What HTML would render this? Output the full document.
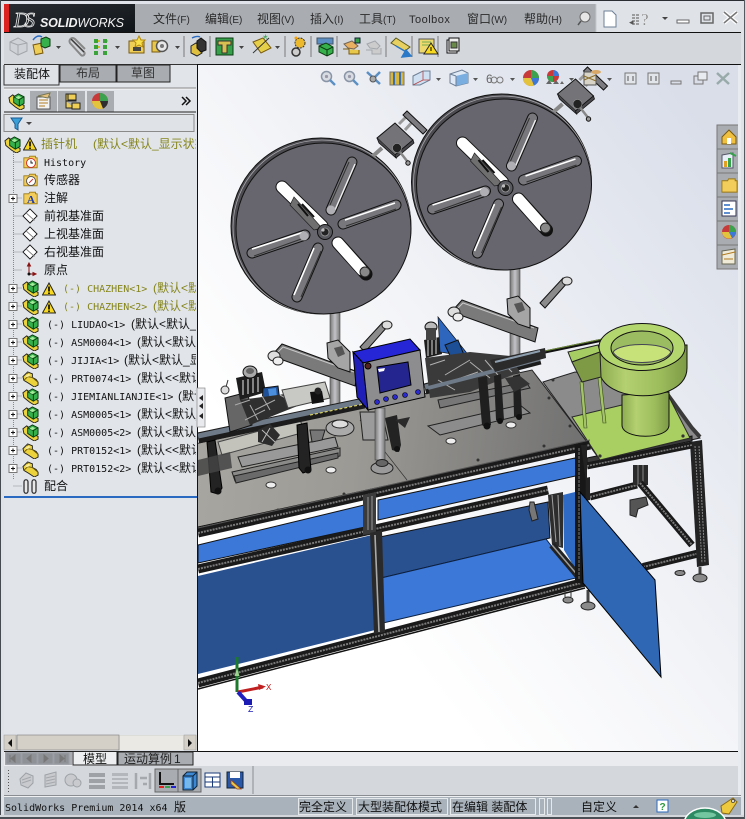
<!DOCTYPE html>
<html><head><meta charset="utf-8"><style>
html,body{margin:0;padding:0;background:#d3d7dc;width:745px;height:819px;overflow:hidden}
svg{display:block}
.c{font-family:"Liberation Sans","WenQuanYi Zen Hei","Noto Sans CJK SC",sans-serif;font-size:12px;fill:#111}
.m{font-family:"DejaVu Sans Mono","Liberation Mono","WenQuanYi Zen Hei",monospace;font-size:10px;fill:#111}
.mn{font-family:"Liberation Sans","WenQuanYi Zen Hei","Noto Sans CJK SC",sans-serif;font-size:12px;fill:#2a2a2a}
.o{fill:#85851a}
.i{fill:none;stroke:#000}
.rk{fill:none;stroke:#1a1a1a;stroke-width:9}
.rd{fill:none;stroke:#7a7a7a;stroke-width:2;stroke-dasharray:2 1}
.rt{fill:none;stroke:#555;stroke-width:1}
.tree text{transform:translateY(-1px)}
</style></head><body>
<svg xmlns="http://www.w3.org/2000/svg" width="745" height="819" viewBox="0 0 745 819">
<defs>
<linearGradient id="bg" gradientUnits="userSpaceOnUse" x1="300" y1="520" x2="745" y2="170"><stop offset="0" stop-color="#fff"/><stop offset=".35" stop-color="#f4f5f8"/><stop offset="1" stop-color="#d9dee9"/></linearGradient>
<linearGradient id="plate" gradientUnits="userSpaceOnUse" x1="200" y1="420" x2="590" y2="470"><stop offset="0" stop-color="#a8a6a0"/><stop offset=".4" stop-color="#9c9a95"/><stop offset="1" stop-color="#6f6f6f"/></linearGradient>
<linearGradient id="logo" x1="0" x2="1" y1="0" y2="1"><stop offset="0" stop-color="#2a2e33"/><stop offset="1" stop-color="#10151a"/></linearGradient>
<linearGradient id="bowl" x1="0" x2="1" y1="0" y2="0"><stop offset="0" stop-color="#8cac50"/><stop offset=".3" stop-color="#b4d070"/><stop offset=".7" stop-color="#9cbc5c"/><stop offset="1" stop-color="#7d9a45"/></linearGradient>
<linearGradient id="pole" x1="0" x2="1" y1="0" y2="0"><stop offset="0" stop-color="#777"/><stop offset=".5" stop-color="#c4c4c8"/><stop offset="1" stop-color="#777"/></linearGradient>
<clipPath id="tree"><rect x="0" y="134" width="196" height="364"/></clipPath>
<clipPath id="vp"><rect x="198" y="65" width="542" height="686"/></clipPath>
<symbol id="asm" viewBox="0 0 18 18"><path d="M1 5 5 2 9 5 9 10 17 13 17 16 13 18 8 15 2 10Z" fill="#ecd23c" stroke="#222"/><path d="M6 4 11 1 17 4 17 11 12 14 6 10Z" fill="#36b04a" stroke="#0c3a12"/><path d="M6 4 12 7 17 4M12 7V14" fill="none" stroke="#0c3a12"/><path d="M8 5 11 3 14 4.500 11 6.500Z" fill="#a6eb9c"/></symbol>
<symbol id="prt" viewBox="0 0 18 18"><path d="M1 7 6 2 11 4 11 8 15 10 17 13 17 16 13 18 7 14 2 11Z" fill="#ecd23c" stroke="#222"/><path d="M6 2V7L11 8M6 7 2 11M11 8 17 13" fill="none" stroke="#6e5b0c"/><path d="M3 8 6 4 9 5 7 7Z" fill="#f9ee9e"/></symbol>
<symbol id="warn" viewBox="0 0 14 14"><path d="M7 1 13.500 13H.5Z" fill="#f8d820" stroke="#222"/><path d="M7 4.500V9.500M7 10.500V12" stroke="#000" stroke-width="1.600"/></symbol>
<symbol id="folder" viewBox="0 0 18 18"><path d="M1 4H7L8 2H15V4H17V16H1Z" fill="#f2cd5c" stroke="#9a7712"/></symbol>
<symbol id="plane" viewBox="0 0 18 18"><path d="M9 1 17 9 9 17 1 9Z" fill="#fff" stroke="#111"/><path d="M4 5 14 14" stroke="#777"/></symbol>
<symbol id="hu" viewBox="0 0 16 16"><circle cx="6.500" cy="6.500" r="5" fill="#d8dce2" stroke="#8995a6" stroke-width="1.500"/><circle cx="6.500" cy="6.500" r="1.600" fill="#99a"/><path d="M10 10 15 15" stroke="#5b8fc4" stroke-width="2.400"/></symbol>
<g id="disc">
  <ellipse cx="321" cy="226" rx="90" ry="88" fill="#4b4b50" stroke="#111"/>
  <ellipse cx="322" cy="227" rx="89" ry="87" fill="none" stroke="#a8a8ac" stroke-width=".8"/>
  <ellipse cx="323.500" cy="228.500" rx="87.500" ry="85.500" fill="#67666e" stroke="#111"/>
  <path d="M282 187 322 226" stroke="#111" stroke-width="13" stroke-linecap="round"/><path d="M282 187 322 226" stroke="#fff" stroke-width="11" stroke-linecap="round"/>
  <path d="M294 197 322 228 314 230 290 205Z" fill="#6f6f6f" stroke="#222" stroke-width=".7"/><path d="M298 204 308 216M302 204 314 217" stroke="#111" stroke-width="2"/>
  <path d="M338 243 366 274" stroke="#111" stroke-width="13" stroke-linecap="round"/><path d="M338 243 362 270" stroke="#fff" stroke-width="11" stroke-linecap="round"/><circle cx="365" cy="272" r="5" fill="#888" stroke="#222"/>
  <path d="M331 210 352 162" stroke="#111" stroke-width="11" stroke-linecap="round"/><path d="M331 210 352 162" stroke="#77777c" stroke-width="9" stroke-linecap="round"/><path d="M335 210 355 164" stroke="#eee" stroke-width="1.400"/><path d="M330 205 349 162" stroke="#333" stroke-width="1"/><circle cx="331" cy="210" r="4.500" fill="#b0b0b4"/>
  <path d="M343 224 396 205" stroke="#111" stroke-width="11" stroke-linecap="round"/><path d="M343 224 396 205" stroke="#77777c" stroke-width="9" stroke-linecap="round"/><path d="M345 220 395 203" stroke="#fff" stroke-width="1.600"/><path d="M346 226 396 209" stroke="#333" stroke-width="1"/>
  <path d="M318 248 297 297" stroke="#111" stroke-width="11" stroke-linecap="round"/><path d="M318 248 297 297" stroke="#77777c" stroke-width="9" stroke-linecap="round"/><path d="M314 248 294 295" stroke="#fff" stroke-width="1.600"/><path d="M321 251 301 297" stroke="#333" stroke-width="1"/>
  <path d="M305 235 252 253" stroke="#111" stroke-width="11" stroke-linecap="round"/><path d="M305 235 252 253" stroke="#77777c" stroke-width="9" stroke-linecap="round"/><path d="M304 232 252 249" stroke="#fff" stroke-width="1.600"/><path d="M304 238 254 256" stroke="#333" stroke-width="1"/><circle cx="304" cy="236" r="4.500" fill="#b0b0b4"/>
  <circle cx="325" cy="232" r="7.500" fill="#595960" stroke="#111"/><circle cx="325" cy="232" r="4" fill="#222" stroke="#999" stroke-width=".8"/><circle cx="323" cy="230" r="1.600" fill="#bbb"/>
  <path d="M382 148 373 156" stroke="#888" stroke-width="4"/><path d="M405 130 415 119M399 124 409 114" stroke="#999" stroke-width="3"/>
  <path d="M377 138 395 123 413 140 395 155Z" fill="#747478" stroke="#111"/><path d="M377 138 379 143 396 158 395 155M395 155 413 140 414 143 396 158" fill="#48484c" stroke="#111" stroke-width=".8"/>
  <path d="M403 115 407 111 427 130 423 134Z" fill="#7b7b80" stroke="#111"/>
  <circle cx="397" cy="148" r="4.500" fill="#222" stroke="#999" stroke-width=".6"/><path d="M400 152 407 161" stroke="#888" stroke-width="2.500"/><circle cx="408" cy="163" r="2.200" fill="#999" stroke="#111"/>
</g>
<g id="arm">
  <path d="M273 354 282 344 358 372 355 386 283 360Z" fill="#7a7a7a" stroke="#111"/>
  <path d="M276 354 283 347 354 372" fill="none" stroke="#c8c8c8"/>
  <ellipse cx="274" cy="356" rx="6" ry="5" fill="#ddd" stroke="#222"/><ellipse cx="278" cy="361" rx="5" ry="4" fill="#eee" stroke="#222"/>
  <path d="M360 347 383 322 388 326 365 352Z" fill="#8b8b8b" stroke="#111"/><ellipse cx="387" cy="325" rx="5" ry="4" fill="#ddd" stroke="#222"/>
  <path d="M327 343 338 340 350 352 350 372 338 368 328 358Z" fill="#a5a5a5" stroke="#111"/><path d="M334 348 342 346 345 354 338 357Z" fill="#555"/>
</g>
</defs>

<!-- base -->
<rect width="745" height="819" fill="#d3d7dc"/>
<rect x="198" y="65" width="542" height="686" fill="url(#bg)"/>

<!-- MACHINE -->
<g clip-path="url(#vp)">
  <!-- poles -->
  <rect x="330" y="305" width="10" height="130" fill="url(#pole)" stroke="#444" stroke-width=".6"/>
  <rect x="510" y="262" width="10" height="100" fill="url(#pole)" stroke="#444" stroke-width=".6"/>
  <use href="#disc"/>
  <use href="#disc" x="180.500" y="-44"/>
  <use href="#arm"/>
  <use href="#arm" x="180" y="-44"/>

  <!-- right table back -->
  <path d="M543 382 575 372 640 380 668 395 700 438 600 460Z" fill="#8b8b8b" stroke="#222"/>
  <path d="M668 395 692 428 700 437" fill="none" stroke="#3a3a3a" stroke-width="4"/>
  <!-- back frame -->
  <path d="M590 497 637 485" class="rk" style="stroke-width:7"/><path d="M590 497 637 485" class="rd"/>
  <path d="M633 465H648V485H633Z" fill="#2a2a2a"/><path d="M638 465V485M643 465V485" stroke="#888" stroke-width="1"/>
  <path d="M640 483 692 545" class="rk" style="stroke-width:7"/><path d="M640 483 692 545" class="rd"/>
  <path d="M630 500 646 497 648 505 638 509 636 517 630 515Z" fill="#555" stroke="#222"/>
  <path d="M643 567 700 553" class="rk" style="stroke-width:8"/><path d="M643 567 700 553" class="rd"/>
  <path d="M684 570 682 574" stroke="#333"/>
  <ellipse cx="680" cy="573" rx="5" ry="2.500" fill="#888" stroke="#222"/>
  <path d="M690 442 702 440 709 565 697 567Z" fill="#232323"/><path d="M695 446 702 563M699 446 705 563" stroke="#888" stroke-dasharray="2 1"/>
  <path d="M700 567V574" stroke="#444" stroke-width="3"/><ellipse cx="700" cy="578" rx="7" ry="4" fill="#8a8a8a" stroke="#222"/>
  <path d="M587 458 692 436 692 441 587 463Z" fill="#3a3a3a" stroke="#111"/>
  <path d="M587 466 692 445" class="rk" style="stroke-width:7"/><path d="M587 466 692 445" class="rd" style="stroke-width:1.600"/>
  <path d="M577 480 590 477 590 500 577 503Z" fill="#222"/>

  <!-- green plate -->
  <path d="M572 417 622 405 668 395 690 438 600 460Z" fill="#a9cf62" stroke="#2a2a2a"/>
  <circle cx="600" cy="456" r="1.600" fill="#333"/><circle cx="683" cy="436" r="1.600" fill="#333"/>
  <!-- left plate -->
  <path d="M190 445 532 370 587 442 190 530Z" fill="url(#plate)" stroke="#222"/>
  <path d="M198 527 587 442" stroke="#111"/>
  <g fill="#eee" stroke="#333">
    <ellipse cx="271" cy="485" rx="5" ry="3"/><ellipse cx="331" cy="470" rx="5" ry="3"/><ellipse cx="451" cy="441" rx="5" ry="3"/><ellipse cx="511" cy="425" rx="5" ry="3"/>
  </g>
  <g fill="#333"><circle cx="212" cy="526" r="1.500"/><circle cx="278" cy="510" r="1.500"/><circle cx="344" cy="494" r="1.500"/><circle cx="412" cy="481" r="1.500"/><circle cx="478" cy="460" r="1.500"/><circle cx="544" cy="446" r="1.500"/><circle cx="570" cy="426" r="1.500"/><circle cx="549" cy="398" r="1.500"/><circle cx="553" cy="380" r="1.500"/></g>
  <path d="M360 420 407 480" stroke="#333" stroke-width=".7"/>

  <!-- pole feet / back base -->
  <ellipse cx="340" cy="428" rx="14" ry="8" fill="#aaa" stroke="#222"/><ellipse cx="340" cy="424" rx="8" ry="4" fill="#ddd" stroke="#222"/>

  <!-- bases left -->
  <path d="M232 472 340 448 340 456 235 481Z" fill="#8a8a88" stroke="#222"/><path d="M234 476 338 453 338 458 236 483Z" fill="#6a6a6a" stroke="#222"/>
  <path d="M238 457 335 437 338 447 242 467Z" fill="#999" stroke="#222"/>
  <path d="M218 442 300 420 305 432 222 455Z" fill="#c3c3bc" stroke="#444"/>
  <path d="M428 426 520 405 530 413 440 435Z" fill="#8c8c8c" stroke="#222"/>
  <!-- rails -->
  <path d="M198 438 364 403" stroke="#1c1c1c" stroke-width="11" fill="none"/><path d="M198 436 364 401" stroke="#6e7a88" stroke-width="5" fill="none"/>
  <path d="M310 415 364 404" stroke="#d8d060" stroke-width="1.200" stroke-dasharray="3 2" fill="none"/>
  <path d="M425 389 540 359" stroke="#1c1c1c" stroke-width="11" fill="none"/><path d="M425 387 540 357" stroke="#6e7a88" stroke-width="5" fill="none"/>
  <path d="M540 353 617 337" stroke="#111" stroke-width="3" fill="none"/><path d="M540 352 617 336" stroke="#6c8a38" stroke-width="1" fill="none"/>
  <!-- left stations -->
  <path d="M225 398 248 392 252 425 230 432Z" fill="#666" stroke="#111"/>
  <path d="M236 378 262 372 266 392 240 400Z" fill="#1d1d1d"/>
  <path d="M243 380V395M248 379V394M253 378V393M258 377V392" stroke="#bbb" stroke-width="1.300"/>
  <ellipse cx="250" cy="372" rx="7" ry="6" fill="#aaa" stroke="#111"/><ellipse cx="250" cy="371" rx="4" ry="3" fill="#666"/>
  <path d="M263 388 278 386 280 402 270 410 262 405Z" fill="#1f4f95" stroke="#111"/><path d="M268 389 276 388 277 398 270 400Z" fill="#4b8fdc"/>
  <path d="M240 400 285 394 300 405 250 425Z" fill="#2f2f2f"/>
  <path d="M235 405 250 400M255 410 275 400M245 420 265 410M280 395 295 403M262 396 270 410M250 405 258 420" stroke="#aaa" stroke-width="1"/>
  <path d="M282 390 325 382 330 398 288 408Z" fill="#c8c8c4" stroke="#444"/>
  <path d="M310 392 322 391 324 402 312 404Z" fill="#111"/><circle cx="318" cy="391" r="3.500" fill="#222"/>
  <path d="M224 394 228 380" stroke="#333"/><circle cx="225" cy="390" r="4" fill="#ddd" stroke="#333"/>
  <path d="M258 430 270 424 280 435 272 446 258 442Z" fill="#2c2c2c"/><path d="M262 430 275 442M270 428 262 442" stroke="#bbb"/>
  <path d="M207 442 215 440 222 488 218 494 211 492Z" fill="#232323" stroke="#000"/><circle cx="218" cy="491" r="3.500" fill="#111"/>
  <path d="M198 460 230 452 232 468 198 476Z" fill="#444" opacity=".85"/>
  <path d="M297 425 307 423 311 470 303 473 299 468Z" fill="#232323" stroke="#000"/><circle cx="308" cy="470" r="3.500" fill="#111"/>
  <path d="M310 430 325 430 322 440 312 442Z" fill="#777" stroke="#222"/>
  <path d="M360 412 382 412 388 440 363 440Z" fill="#9b9b9b" stroke="#222"/>
  <path d="M385 418 397 415 401 445 399 452 392 450Z" fill="#232323"/><path d="M395 420 410 417 405 428Z" fill="#2a2a2a"/>
  <circle cx="397" cy="449" r="3" fill="#111"/>
  <!-- right stations -->
  <path d="M424 340 440 337 442 354 426 358Z" fill="#1d1d1d"/>
  <path d="M428 340V356M432 339V355M436 338V354" stroke="#bbb" stroke-width="1.200"/>
  <ellipse cx="431" cy="327" rx="6" ry="5" fill="#bbb" stroke="#111"/><rect x="426" y="328" width="10" height="12" fill="#444"/>
  <path d="M438 317 470 357 440 352Z" fill="#2e66bd" stroke="#111" stroke-width=".7"/>
  <path d="M445 345 458 340 464 355 452 360Z" fill="#1d4f96" stroke="#111"/>
  <path d="M425 358 470 352 510 356 520 372 470 392 430 398Z" fill="#3a3a3a"/>
  <path d="M430 365 445 360M445 375 470 360M455 380 478 372M470 362 490 378M438 380 455 390M500 360 512 372M485 360 498 375" stroke="#b0b0b0"/>
  <path d="M438 400 526 382 530 388 440 408Z" fill="#777" stroke="#222"/>
  <path d="M428 388 540 359" stroke="#6e7a88" stroke-width="4"/>
  <path d="M490 360 545 348 546 358 495 372Z" fill="#2b2b2b"/><path d="M495 362 540 351" stroke="#8ea0b0" stroke-width="2"/>
  <path d="M478 378 487 376 491 425 486 428 482 425Z" fill="#1f1f1f"/><circle cx="487" cy="426" r="3.500" fill="#111"/>
  <path d="M494 376 501 374 504 420 500 423 496 420Z" fill="#1f1f1f"/><circle cx="500" cy="421" r="3" fill="#111"/>
  <path d="M513 376 520 374 522 416 518 419 514 416Z" fill="#1f1f1f"/><circle cx="519" cy="417" r="3" fill="#111"/>
  <path d="M505 378 520 376 530 384 514 392Z" fill="#333"/>
  <!-- main table black clip near box -->
  <rect x="375" y="408" width="10" height="52" fill="url(#pole)" stroke="#444" stroke-width=".6"/>
  <ellipse cx="382" cy="468" rx="11" ry="6" fill="#9a9a9a" stroke="#222"/><ellipse cx="382" cy="463" rx="6" ry="3.500" fill="#666" stroke="#222"/>
  <!-- control box -->
  <path d="M353 352 410 339 420 350 363 363Z" fill="#2626d6" stroke="#000"/>
  <path d="M353 352 363 363 368 410 357 397Z" fill="#2020b8" stroke="#000"/>
  <path d="M363 363 420 350 425 397 368 410Z" fill="#8d8d8f" stroke="#000"/>
  <path d="M377 367 408 362 411 385 380 393Z" fill="#25258f" stroke="#000"/><path d="M378 369 385 368 384 371 379 372Z" fill="#fff"/>
  <g fill="#2a2acc" stroke="#000" stroke-width=".6"><circle cx="377" cy="402" r="2.500"/><circle cx="386" cy="399" r="2.500"/><circle cx="395" cy="397" r="2.500"/><circle cx="405" cy="395" r="2.500"/><circle cx="418" cy="392" r="2.500"/></g>
  <circle cx="368" cy="366" r="3" fill="#522" stroke="#000"/>

  <!-- bowl -->
  <path d="M622 395V425C622 440 669 440 669 425V392Z" fill="url(#bowl)" stroke="#111"/>
  <path d="M599 345V368C599 405 687 405 687 368V345Z" fill="url(#bowl)" stroke="#111"/>
  <ellipse cx="642" cy="347" rx="43" ry="23.500" fill="#b4d66e" stroke="#111"/>
  <ellipse cx="642" cy="348" rx="31" ry="17" fill="#9cbc62" stroke="#111"/>
  <path d="M613 352C620 366 664 366 671 352 664 342 620 342 613 352Z" fill="#c8e27a" stroke="#445"/>
  <path d="M580 382 584 428 587 428 583 381ZM598 378 603 423 606 423 601 377Z" fill="#a2c465" stroke="#3a4a20" stroke-width=".6"/>
  <path d="M568 352 598 345 600 352 572 362Z" fill="#a6cc64" stroke="#222"/>
  <path d="M572 362 600 352 601 377 582 382Z" fill="#7f9a44" stroke="#222"/>

  <!-- lower blue -->
  <path d="M198 545 364 505 365 527 198 563Z" fill="#3b78d8" stroke="#111"/>
  <path d="M378 500 575 458 580 475 378 520Z" fill="#3b78d8" stroke="#111"/>
  <path d="M198 576 372 535 375 630 198 674Z" fill="#29508f"/>
  <path d="M380 537 548 502 550 538 381 578Z" fill="#29508f" stroke="#111"/>
  <path d="M381 578 546 539 576 578 383 623Z" fill="#3b78d8" stroke="#0c2040"/>
  <path d="M563 495 575 492 576 570 564 550Z" fill="#2f6ac5"/>
  <path d="M534 502 538 519 532 521 529 510 530 502Z" fill="#777" stroke="#222"/>
  <!-- top rails -->
  <path d="M198 533 590 445" class="rk"/><path d="M198 533 590 445" class="rd"/><path d="M198 528 590 440" class="rt"/>
  <path d="M198 569 548 490" class="rk"/><path d="M198 569 548 490" class="rd"/>
  <path d="M198 683 585 582" class="rk"/><path d="M198 683 585 582" class="rd"/><path d="M198 689 585 588" stroke="#111" stroke-width="1.500" fill="none"/>
  <!-- posts -->
  <path d="M363 495 376 492 376 533 363 535Z" fill="#3b3b3b"/><path d="M368 497V530M372 496V530" stroke="#999"/>
  <path d="M370 533 382 530 385 632 374 634Z" fill="#2a2a2a"/><path d="M375 535 379 632" stroke="#aaa" stroke-width="1.600"/>
  <path d="M548 495 563 492 563 548 552 545Z" fill="#2d2d2d"/><path d="M552 495 556 542M558 495 560 546" stroke="#a0a0a0"/>
  <path d="M552 545 580 578" stroke="#222" stroke-width="7" fill="none"/><path d="M552 545 580 578" stroke="#9a9a9a" stroke-width="1.500" fill="none"/>
  <path d="M575 445 586 443 585 585 575 582Z" fill="#171717"/><path d="M579 448 579 580" stroke="#777" stroke-dasharray="3 1"/>
  <path d="M581 445H587V490" fill="#222"/>
  <ellipse cx="568" cy="600" rx="5" ry="3" fill="#8a8a8a" stroke="#222"/><path d="M565 590V597M571 588V597" stroke="#333"/>
  <path d="M588 590V602" stroke="#444" stroke-width="3"/><ellipse cx="588" cy="606" rx="7" ry="4" fill="#8a8a8a" stroke="#222"/>
  <!-- door -->
  <path d="M580 492 655 580 661 677 583 583Z" fill="#2f67b5" stroke="#000"/>
  <!-- triad -->
  <path d="M237 657V692" stroke="#1c7a2c" stroke-width="3"/><path d="M237 668 234.500 676H239.500Z" fill="#9ad48f"/>
  <path d="M238 692 263 687" stroke="#c02020" stroke-width="3"/><path d="M258 684 266 686.500 259 690Z" fill="#c02020"/>
  <path d="M238 692 247 702" stroke="#2020c0" stroke-width="4"/><rect x="244" y="699" width="8" height="6" fill="#1c1cb4"/>
  <text x="266" y="690" font-family="Liberation Mono" font-size="9" fill="#c02020">X</text>
  <text x="248" y="712" font-family="Liberation Mono" font-size="9" fill="#1c1cb4">Z</text>
</g>

<!-- heads-up toolbar -->
<use href="#hu" x="320" y="70" width="16" height="16"/>
<use href="#hu" x="343" y="70" width="16" height="16"/>
<path d="M367 72 380 84M380 72 372 80" stroke="#5b8fc4" stroke-width="2.500" fill="none"/><circle cx="373" cy="79" r="3" fill="#aaa" stroke="#555"/>
<path d="M390 72H404V85H390Z" fill="#d6b63e" stroke="#777"/><path d="M394 72V85M400 72V85" stroke="#3a6fb4" stroke-width="2"/>
<path d="M413 76 423 71H430V80L420 85H413Z" fill="#cfe0f2" stroke="#6d7f96"/><path d="M423 71V80H430M423 80 413 85" stroke="#b44" stroke-width=".8" fill="none"/>
<path d="M450 74 462 70 468 73V83L456 86 450 83Z" fill="#dfe9f5" stroke="#6d7f96"/><path d="M456 76 468 73V83L456 86Z" fill="#7aaee0"/><path d="M456 76V86M450 74 456 76" stroke="#6d7f96"/>
<text x="486" y="83" font-family="Liberation Sans" font-size="12" fill="#666">6</text><circle cx="494" cy="80" r="3" fill="none" stroke="#777"/><circle cx="500" cy="80" r="3" fill="none" stroke="#777"/>
<circle cx="531" cy="78" r="8" fill="#c83a3a"/><path d="M531 78 523 78A8 8 0 0 0 534 85.500Z" fill="#e3c23c"/><path d="M531 78 534 85.500A8 8 0 0 0 539 78Z" fill="#3c78d8"/><path d="M531 78 539 78A8 8 0 0 0 531 70Z" fill="#3ca24e"/>
<circle cx="553" cy="76" r="6" fill="#c83a3a"/><path d="M553 76V70A6 6 0 0 1 559 76Z" fill="#3c78d8"/><path d="M553 76H547A6 6 0 0 0 553 82Z" fill="#3ca24e"/><path d="M546 84 549 80 552 84ZM553 84 556 80 559 84ZM560 84 562 81 564 84Z" fill="#666"/>
<rect x="584" y="72" width="12" height="13" fill="#d8d4c8" stroke="#555"/><path d="M584 76 596 81M584 80 596 75" stroke="#8a6e2a"/><ellipse cx="596" cy="72" rx="5" ry="2" fill="#d8a868"/>
<g fill="#555"><path d="M436 78h5l-2.500 3zM473 78h5l-2.500 3zM510 78h5l-2.500 3zM569 78h5l-2.500 3zM607 78h5l-2.500 3z"/></g>
<rect x="625" y="73" width="11" height="11" fill="#e2e5e9" stroke="#777"/><path d="M628 76v5M633 76v5" stroke="#555"/>
<rect x="648" y="73" width="11" height="11" fill="#e2e5e9" stroke="#777"/><path d="M651 76v5M656 76v5" stroke="#555"/>
<rect x="671" y="81" width="10" height="3" fill="none" stroke="#777"/>
<rect x="694" y="76" width="9" height="8" fill="none" stroke="#777"/><rect x="698" y="72" width="9" height="8" fill="#e8ebef" stroke="#777"/>
<path d="M717 73 729 84M729 73 717 84" stroke="#9aa" stroke-width="2.500"/>

<!-- right task pane tabs -->
<g stroke="#777">
 <rect x="717" y="125" width="24" height="24" fill="#a9adb2"/><rect x="717" y="149" width="24" height="24" fill="#a9adb2"/><rect x="717" y="173" width="24" height="24" fill="#a9adb2"/><rect x="717" y="197" width="24" height="24" fill="#a9adb2"/><rect x="717" y="221" width="24" height="24" fill="#a9adb2"/><rect x="717" y="245" width="24" height="24" fill="#a9adb2"/>
</g>
<path d="M722 137 729 130 736 137V144H722Z" fill="#f0c040" stroke="#7a5a10"/><rect x="727" y="138" width="4" height="6" fill="#fff"/>
<path d="M722 155 733 153V168H722Z" fill="#e6eef6" stroke="#556"/><rect x="724" y="161" width="3" height="6" fill="#e0a020"/><rect x="728" y="158" width="3" height="9" fill="#36a04a"/><path d="M730 153 736 156" stroke="#36a04a" stroke-width="2"/>
<use href="#folder" x="721" y="177" width="17" height="17"/>
<rect x="722" y="201" width="14" height="15" fill="#fff" stroke="#335"/><path d="M724 205h6M724 209h9M724 213h6" stroke="#2a6ac0" stroke-width="1.500"/>
<circle cx="729" cy="232" r="7" fill="#c83a3a"/><path d="M729 232H722A7 7 0 0 0 732 238Z" fill="#e3c23c"/><path d="M729 232 732 238A7 7 0 0 0 736 232Z" fill="#3c78d8"/><path d="M729 232H736A7 7 0 0 0 729 225Z" fill="#3ca24e"/>
<path d="M722 251 735 249V264H722Z" fill="#f0ead8" stroke="#665"/><path d="M722 255 735 252M724 259h9" stroke="#b07c20"/>

<!-- TOP -->
<rect x="0" y="0" width="745" height="4" fill="#e0e4ea"/>
<rect x="0" y="0" width="745" height="1" fill="#2a2e33"/>
<rect x="4" y="4" width="737" height="28" fill="#a9adb2"/>
<rect x="596" y="4" width="145" height="28" fill="#dfe3e8"/>
<path d="M596 4V32" stroke="#c5c9ce"/>
<rect x="4" y="4" width="131" height="28" fill="url(#logo)"/><rect x="4" y="4" width="5" height="28" fill="#d22"/>
<text x="14" y="27" font-family="Liberation Serif" font-style="italic" font-size="21" fill="none" stroke="#e8e8e8" stroke-width=".8" textLength="21">DS</text>
<text x="40" y="27" font-family="Liberation Sans" font-size="12.500" font-weight="bold" font-style="italic" fill="#f2f2f2" textLength="84">SOLID<tspan font-weight="normal">WORKS</tspan></text>
<g class="mn">
 <text x="153" y="23">文件<tspan font-size="10">(F)</tspan></text>
 <text x="205" y="23">编辑<tspan font-size="10">(E)</tspan></text>
 <text x="257" y="23">视图<tspan font-size="10">(V)</tspan></text>
 <text x="310" y="23">插入<tspan font-size="10">(I)</tspan></text>
 <text x="359" y="23">工具<tspan font-size="10">(T)</tspan></text>
 <text x="409" y="23" font-size="11" letter-spacing=".5">Toolbox</text>
 <text x="467" y="23">窗口<tspan font-size="10">(W)</tspan></text>
 <text x="524" y="23">帮助<tspan font-size="10">(H)</tspan></text>
</g>
<ellipse cx="585" cy="17" rx="5" ry="5" fill="#e6e6e6" stroke="#666"/><path d="M581 21 578 25" stroke="#555" stroke-width="1.500"/>
<path d="M604 11H612L616 15V27H604Z" fill="#fff" stroke="#6d7f96"/>
<text x="629" y="25" font-family="Liberation Sans" font-size="9" fill="#555">◂</text><path d="M632 15h8M632 18h8M632 21h8M632 24h8" stroke="#555" stroke-width="1" stroke-dasharray="3 1"/>
<text x="641" y="25" font-family="Liberation Serif" font-size="17" fill="#777" stroke="#fff" stroke-width=".2">?</text>
<path d="M662 17h6l-3 3z" fill="#444"/>
<rect x="677" y="20" width="12" height="3" fill="#fff" stroke="#666"/>
<rect x="701" y="13" width="12" height="10" fill="none" stroke="#666" stroke-width="1.500"/><rect x="704" y="16" width="6" height="4" fill="#dfe3e8" stroke="#666"/>
<path d="M724 12 737 23M737 12 724 23" stroke="#fff" stroke-width="4"/><path d="M724 12 737 23M737 12 724 23" stroke="#777" stroke-width="1.500"/>
<rect x="4" y="32" width="737" height="1" fill="#111"/>

<!-- toolbar -->
<rect x="4" y="33" width="737" height="31" fill="#d4d8dd"/>
<rect x="197" y="64" width="544" height="1" fill="#111"/>
<rect x="4" y="64" width="193" height="1" fill="#333"/>
<g stroke="#777"><path d="M184 36V57M210 36V57M285 36V57M311 36V57M337 36V57M386 36V57M412 36V57M438 36V57"/></g>
<g fill="#444"><path d="M56 46h5l-2.500 3zM115 46h5l-2.500 3zM175 46h5l-2.500 3zM239 46h5l-2.500 3zM275 46h5l-2.500 3z"/></g>
<!-- 1 gray cube --><path d="M10 42 18 38 27 43V51L18 55 10 50Z" fill="#cfd2d6" stroke="#a3a7ac"/><path d="M18 45 27 43M18 45 10 42M18 45V55" stroke="#a3a7ac" fill="none"/>
<!-- 2 --><path d="M34 44H42V54H34Z" fill="#efce57" stroke="#7a5a10" transform="rotate(-12 38 49)"/><path d="M41 39 46 37 50 39V46L45 48 41 46Z" fill="#36b04a" stroke="#0c3a12"/><path d="M33 40C36 36 39 35 42 37" fill="none" stroke="#2a6ac0" stroke-width="1.500"/>
<!-- 3 clip --><path d="M71 39 84 52C86 54 83 57 81 55L70 43C68 40 72 36 75 39L85 49" fill="none" stroke="#888" stroke-width="2"/><path d="M71 39 84 52" stroke="#333" fill="none"/>
<!-- 4 --><g fill="#3aa43a"><rect x="94" y="39" width="4" height="4"/><rect x="94" y="45" width="4" height="4"/><rect x="94" y="51" width="4" height="4"/><rect x="103" y="39" width="4" height="4"/><rect x="103" y="45" width="4" height="4"/><rect x="103" y="51" width="4" height="4"/></g><path d="M98 41h2M98 47h2M107 41h1" stroke="#d4c020" stroke-width="2"/>
<!-- 5 --><rect x="129" y="41" width="15" height="12" fill="#efce57" stroke="#7a5a10"/><path d="M139 36 141 40 145 40 142 43 143 47 139 45 135 47 136 43 133 40 137 40Z" fill="#f8e04a" stroke="#b58a10"/><rect x="133" y="47" width="8" height="4" fill="#444"/>
<!-- 6 --><path d="M152 41H160V52H152Z" fill="#e8c84a" stroke="#7a5a10"/><circle cx="162" cy="46" r="5.500" fill="#e8e8e8" stroke="#555" stroke-width="1.500"/><circle cx="162" cy="46" r="2" fill="#777"/>
<!-- 7 --><path d="M191 46 196 43 202 46V53L197 56 191 53Z" fill="#e0c040" stroke="#222"/><path d="M197 41 201 38 206 42 206 50 201 52 197 48Z" fill="#333" stroke="#111"/><path d="M192 38C196 36 198 36 200 37" fill="none" stroke="#2a6ac0" stroke-width="1.500"/>
<!-- 8 --><rect x="216" y="38" width="17" height="17" fill="#36a04a" stroke="#0c3a12"/><path d="M218 41H231V45H227V53H222V45H218Z" fill="#d8c050" stroke="#333"/>
<!-- 9 --><path d="M253 42 263 38 271 48 261 53Z" fill="#e6d04a" stroke="#7a5a10"/><path d="M253 53 269 38" stroke="#333"/><text x="263" y="43" font-family="Liberation Sans" font-size="12" fill="#36a04a">*</text>
<!-- 10 --><circle cx="296" cy="52" r="4" fill="#ccc" stroke="#333" stroke-width="1.500"/><circle cx="300" cy="43" r="5" fill="#ecb92c" stroke="#333" stroke-dasharray="2 1"/><circle cx="296" cy="38" r="1.500" fill="#f8a000"/>
<!-- 11 --><rect x="317" y="38" width="16" height="6" fill="#5b8fc4" stroke="#456"/><path d="M319 46 326 43 333 47V53L327 56 319 52Z" fill="#36b04a" stroke="#0c3a12"/><path d="M319 46 327 50 333 47M327 50V56" stroke="#0c3a12" fill="none"/>
<!-- 12 --><path d="M343 49H349V54H359V50" fill="#e8c84a" stroke="#7a5a10"/><path d="M344 44 352 41 358 46 354 49 348 48Z" fill="#e8b060" stroke="#765"/><rect x="355" y="38" width="5" height="5" fill="#36a04a" stroke="#123"/>
<!-- 13 --><path d="M366 50H372V54H381V48" fill="#ccc" stroke="#a3a7ac"/><path d="M367 44 375 41 380 46 377 49 370 48Z" fill="#ccc" stroke="#a3a7ac"/>
<!-- 14 --><path d="M391 43 396 38 410 47 405 51Z" fill="#e8d060" stroke="#5a5a20"/><path d="M396 46 408 53M406 50 402 57 411 56Z" fill="#2a78c8" stroke="#2a78c8" stroke-width="1.500"/>
<!-- 15 --><rect x="419" y="39" width="15" height="14" fill="#ecd86c" stroke="#555"/><path d="M422 42h9M422 45h9" stroke="#7a5"/><path d="M431 43 438 54H424Z" fill="#f8d820" stroke="#222"/><path d="M431 47V51" stroke="#000"/>
<!-- 16 --><rect x="447" y="40" width="10" height="13" fill="#fff" stroke="#111"/><rect x="449" y="38" width="10" height="13" fill="#eee" stroke="#111"/><rect x="451" y="42" width="6" height="6" fill="#6a8a4a" stroke="#333"/>

<!-- LEFT PANEL -->
<rect x="0" y="65" width="197" height="686" fill="#e1e5ea"/>
<rect x="0" y="1" width="4" height="815" fill="#dfe3e8"/>
<rect x="0" y="0" width="1" height="819" fill="#444a50"/>
<rect x="197" y="65" width="1" height="686" fill="#111"/>
<!-- Tabs -->
<path d="M4 65V85H59V65" fill="#dfe3e8" stroke="#333"/>
<path d="M60 65V82H116V65Z" fill="#a9adb2" stroke="#222"/>
<path d="M117 65V82H170V65Z" fill="#a9adb2" stroke="#222"/>
<path d="M4 88H196" stroke="#888"/><path d="M4 89H196" stroke="#f5f5f5"/>
<text x="14" y="78" class="c">装配体</text><text x="76" y="77" class="c" style="fill:#333">布局</text><text x="131" y="77" class="c" style="fill:#333">草图</text>
<rect x="30" y="91" width="27" height="21" fill="#a9adb2"/><rect x="58" y="91" width="27" height="21" fill="#a9adb2"/><rect x="87" y="91" width="27" height="21" fill="#a9adb2"/>
<path d="M4 112H196" stroke="#222"/>
<use href="#asm" x="8" y="93" width="17" height="17"/>
<rect x="37" y="97" width="13" height="12" fill="#f2f2f2" stroke="#555"/><path d="M39 100h9M39 103h9M39 106h6" stroke="#b07c20"/><path d="M38 96 50 93 48 98Z" fill="#e6c27c" stroke="#775"/>
<path d="M66 94H76V101H66ZM66 101V108H74" fill="#efce57" stroke="#222"/><rect x="68" y="94" width="8" height="6" fill="#efce57" stroke="#222"/><rect x="72" y="103" width="8" height="6" fill="#efce57" stroke="#222"/>
<circle cx="100" cy="101" r="8" fill="#c83a3a"/><path d="M100 101H92A8 8 0 0 0 103 108.500Z" fill="#e3c23c"/><path d="M100 101 103 108.500A8 8 0 0 0 108 101Z" fill="#2f2f2f"/><path d="M100 101H108A8 8 0 0 0 100 93Z" fill="#3ca24e"/>
<path d="M182 97 186 101 182 105M186 97 190 101 186 105" fill="none" stroke="#111" stroke-width="1.500"/>
<rect x="4" y="114.500" width="190" height="17" fill="#dfe3e8" stroke="#8a8a8a"/>
<path d="M11 118H22L18 124V130L15 128V124Z" fill="#3ca0d8" stroke="#1a5a90"/><path d="M26 122h6l-3 3z" fill="#444"/>

<!-- Tree -->
<g clip-path="url(#tree)" class="tree">
<path d="M13.500 150V480M13.500 162H22M13.500 180H22M13.500 198H22M13.500 216H22M13.500 234H22M13.500 252H22M13.500 270H22M13.500 288H22M13.500 306H22M13.500 324H22M13.500 342H22M13.500 360H22M13.500 378H22M13.500 396H22M13.500 414H22M13.500 432H22M13.500 450H22M13.500 468H22M13.500 486H22" stroke="#888" stroke-dasharray="1 1" fill="none"/>
<use href="#asm" x="4" y="136" width="17" height="17"/><use href="#warn" x="23" y="137" width="14" height="14"/>
<text x="41" y="149" class="c o">插针机</text><text x="93" y="149" class="c o">(默认&lt;默认_显示状态</text>

<use href="#folder" x="23" y="154" width="15" height="16"/><circle cx="31" cy="163" r="4.500" fill="#fff" stroke="#c33"/><path d="M31 160.500V163H33" stroke="#222" fill="none"/>
<text x="44" y="167" class="m">History</text>
<use href="#folder" x="23" y="172" width="15" height="16"/><circle cx="31" cy="181" r="4.500" fill="#fff" stroke="#555"/><path d="M29 183 33 179" stroke="#c33"/>
<text x="44" y="185" class="c">传感器</text>
<use href="#folder" x="23" y="190" width="15" height="16"/><text x="27" y="204" font-family="Liberation Serif" font-weight="bold" font-size="11" fill="#1a3ab0">A</text>
<text x="44" y="203" class="c">注解</text>
<use href="#plane" x="22" y="208" width="16" height="16"/><text x="44" y="221" class="c">前视基准面</text>
<use href="#plane" x="22" y="226" width="16" height="16"/><text x="44" y="239" class="c">上视基准面</text>
<use href="#plane" x="22" y="244" width="16" height="16"/><text x="44" y="257" class="c">右视基准面</text>
<path d="M29 263V274H36M29 263 27.500 266H30.500ZM36 274 33 272.500V275.500Z" stroke="#8a1010" fill="none"/><circle cx="29" cy="274" r="1.500" fill="#111"/>
<text x="44" y="275" class="c">原点</text>

<path d="M9 194.500h8v8h-8zM9 284.500h8v8h-8zM9 302.500h8v8h-8zM9 320.500h8v8h-8zM9 338.500h8v8h-8zM9 356.500h8v8h-8zM9 374.500h8v8h-8zM9 392.500h8v8h-8zM9 410.500h8v8h-8zM9 428.500h8v8h-8zM9 446.500h8v8h-8zM9 464.500h8v8h-8z" fill="#fff" stroke="#777"/>
<path d="M11 198.500h4M13 196.500v4M11 288.500h4M13 286.500v4M11 306.500h4M13 304.500v4M11 324.500h4M13 322.500v4M11 342.500h4M13 340.500v4M11 360.500h4M13 358.500v4M11 378.500h4M13 376.500v4M11 396.500h4M13 394.500v4M11 414.500h4M13 412.500v4M11 432.500h4M13 430.500v4M11 450.500h4M13 448.500v4M11 468.500h4M13 466.500v4" stroke="#111"/>
<use href="#asm" x="22" y="280" width="17" height="17"/><use href="#warn" x="42" y="282" width="14" height="14"/>
<text x="63" y="293" class="m o">(-) CHAZHEN&lt;1&gt;</text><text x="153" y="293" class="c o">(默认&lt;默</text>
<use href="#asm" x="22" y="298" width="17" height="17"/><use href="#warn" x="42" y="300" width="14" height="14"/>
<text x="63" y="311" class="m o">(-) CHAZHEN&lt;2&gt;</text><text x="153" y="311" class="c o">(默认&lt;默</text>

<use href="#asm" x="22" y="316" width="17" height="17"/><text x="47" y="329" class="m">(-) LIUDAO&lt;1&gt;</text><text x="131" y="329" class="c">(默认&lt;默认_显</text>
<use href="#asm" x="22" y="334" width="17" height="17"/><text x="47" y="347" class="m">(-) ASM0004&lt;1&gt;</text><text x="137" y="347" class="c">(默认&lt;默认_显</text>
<use href="#asm" x="22" y="352" width="17" height="17"/><text x="47" y="365" class="m">(-) JIJIA&lt;1&gt;</text><text x="124" y="365" class="c">(默认&lt;默认_显</text>
<use href="#prt" x="22" y="370" width="17" height="17"/><text x="47" y="383" class="m">(-) PRT0074&lt;1&gt;</text><text x="137" y="383" class="c">(默认&lt;&lt;默认</text>
<use href="#asm" x="22" y="388" width="17" height="17"/><text x="47" y="401" class="m">(-) JIEMIANLIANJIE&lt;1&gt;</text><text x="178" y="401" class="c">(默认</text>
<use href="#asm" x="22" y="406" width="17" height="17"/><text x="47" y="419" class="m">(-) ASM0005&lt;1&gt;</text><text x="137" y="419" class="c">(默认&lt;默认_显</text>
<use href="#asm" x="22" y="424" width="17" height="17"/><text x="47" y="437" class="m">(-) ASM0005&lt;2&gt;</text><text x="137" y="437" class="c">(默认&lt;默认_显</text>
<use href="#prt" x="22" y="442" width="17" height="17"/><text x="47" y="455" class="m">(-) PRT0152&lt;1&gt;</text><text x="137" y="455" class="c">(默认&lt;&lt;默认</text>
<use href="#prt" x="22" y="460" width="17" height="17"/><text x="47" y="473" class="m">(-) PRT0152&lt;2&gt;</text><text x="137" y="473" class="c">(默认&lt;&lt;默认</text>
<path d="M24 482C24 479 28 479 28 482V491C28 494 24 494 24 491ZM32 482C32 479 36 479 36 482V491C36 494 32 494 32 491Z" fill="#e8e8e8" stroke="#333" stroke-width="1.300"/>
<text x="44" y="491" class="c">配合</text>
</g>
<path d="M4 497H197" stroke="#2a6ac0" stroke-width="2"/>
<!-- collapse gripper -->
<rect x="197" y="388" width="8" height="39" fill="#e8eaee" stroke="#888" stroke-width=".7"/>
<path d="M203 395 199 398 203 401ZM203 403 199 406 203 409ZM203 413 199 416 203 419Z" fill="#222"/>

<!-- scrollbar -->
<rect x="4" y="735" width="193" height="15" fill="#dcdcd8"/>
<rect x="17" y="735" width="102" height="15" fill="#d4d0c8" stroke="#888" stroke-width=".7"/>
<rect x="120" y="736" width="63" height="14" fill="#ebe9e4"/>
<rect x="4" y="735" width="12" height="15" fill="#d4d0c8" stroke="#999" stroke-width=".5"/><path d="M12 739 8 743 12 747Z" fill="#111"/>
<rect x="184" y="735" width="12" height="15" fill="#d4d0c8" stroke="#999" stroke-width=".5"/><path d="M188 739 192 743 188 747Z" fill="#111"/>

<!-- BOTTOM -->
<rect x="198" y="751" width="540" height="1" fill="#111"/>
<rect x="4" y="751" width="194" height="1" fill="#222"/>
<rect x="4" y="752" width="737" height="14" fill="#e9ebee"/>
<rect x="4" y="766" width="737" height="29" fill="#d4d8dd"/>
<rect x="5" y="752" width="67" height="13" fill="#a9adb2"/>
<g fill="#8e9196" stroke="#9ba0a5"><rect x="6" y="753" width="15" height="11"/><rect x="22" y="753" width="15" height="11"/><rect x="38" y="753" width="15" height="11"/><rect x="54" y="753" width="15" height="11"/></g>
<path d="M15 755 11 758.500 15 762ZM31 755 27 758.500 31 762ZM44 755 48 758.500 44 762ZM60 755 64 758.500 60 762ZM10 755V762M65 755V762" fill="#777" stroke="#777"/>
<path d="M73 752V765H117V752" fill="#eceef0" stroke="#222"/>
<rect x="118" y="752" width="75" height="13" fill="#a9adb2" stroke="#222"/>
<text x="83" y="763" class="c">模型</text>
<text x="124" y="763" class="c" style="fill:#222">运动算例<tspan x="174">1</tspan></text>
<path d="M8.500 770V792" stroke="#555" stroke-dasharray="1 2"/>
<path d="M253 766V794" stroke="#8a8e93"/>
<g fill="#c8cace" stroke="#9ea2a7">
  <path d="M20 779 26 773 33 776 33 783 28 788 21 785Z"/><path d="M45 775 56 772 56 785 45 787Z"/>
  <circle cx="71" cy="780" r="6"/><circle cx="77" cy="783" r="4"/>
</g>
<path d="M22 780 31 777M22 783 31 780M46 778 55 776M46 781 55 779M46 784 55 782" stroke="#a4a7ab" fill="none"/>
<path d="M89 773H105V777H89ZM89 779H105V783H89ZM89 785H105V789H89Z" fill="#9ea2a7"/>
<g fill="#b3b6ba"><rect x="112" y="773" width="16" height="3"/><rect x="112" y="778" width="16" height="2"/><rect x="112" y="782" width="16" height="2"/><rect x="112" y="786" width="16" height="3"/></g>
<path d="M136 773V789M150 773V789M140 778H147M143 784H147" stroke="#a5a8ac" stroke-width="2.500" fill="none"/>
<rect x="155" y="769" width="23" height="23" fill="#a9adb2" stroke="#666"/>
<rect x="178" y="769" width="23" height="23" fill="#a9adb2" stroke="#666"/>
<path d="M160 772V784H174" fill="none" stroke="#111" stroke-width="2"/><rect x="159" y="786" width="5" height="2" fill="#d22"/><rect x="165" y="786" width="5" height="2" fill="#36a04a"/><rect x="171" y="786" width="5" height="2" fill="#22c"/>
<path d="M183 776 187 772H197V786L193 790H183Z" fill="#3c88d4" stroke="#123"/><path d="M183 776H193V790M193 776 197 772" stroke="#123" fill="none"/><path d="M185 778H191V788H185Z" fill="#76b8ec"/>
<rect x="205" y="773" width="15" height="14" fill="#fff" stroke="#1a3a78"/><path d="M205 777H220M205 782H220M212.500 777V787" stroke="#1a3a78"/>
<rect x="227" y="772" width="16" height="16" fill="#2a58a8" stroke="#123"/><rect x="230" y="772" width="10" height="6" fill="#fff"/><path d="M231 780 241 789 237 789 231 784Z" fill="#e8c84a" stroke="#9a4020" stroke-width=".8"/>

<!-- Status -->
<rect x="4" y="795" width="737" height="1" fill="#8a8e93"/>
<rect x="4" y="796" width="737" height="1" fill="#eef0f2"/>
<rect x="4" y="797" width="737" height="18" fill="#a9b2bb"/>
<rect x="0" y="815" width="745" height="2" fill="#d3d7dc"/>
<rect x="0" y="817" width="745" height="2" fill="#4a5056"/>
<text x="5" y="811" class="m">SolidWorks Premium 2014 x64</text><text x="174" y="811" class="c">版</text>
<g fill="none" stroke="#e6e9ec"><rect x="298.500" y="798.500" width="54" height="16"/><rect x="356.500" y="798.500" width="91" height="16"/><rect x="450.500" y="798.500" width="85" height="16"/><rect x="539.500" y="798.500" width="5" height="16"/><rect x="547.500" y="798.500" width="4" height="16"/></g>
<text x="299" y="811" class="c">完全定义</text>
<text x="358" y="811" class="c">大型装配体模式</text>
<text x="452" y="811" class="c">在编辑 装配体</text>
<text x="581" y="811" class="c">自定义</text>
<path d="M636 805 639 808H633Z" fill="#333"/>
<rect x="657" y="800" width="11" height="12" fill="#fff" stroke="#2a6ac0"/><text x="659.500" y="810" font-family="Liberation Sans" font-weight="bold" font-size="10" fill="#2a9a3a">?</text>
<path d="M721 806 733 798 737 802 729 814 722 813Z" fill="#ecc93f" stroke="#8a6a10"/><circle cx="733" cy="801" r="1.500" fill="#fff" stroke="#555"/>
<!-- right edge -->
<rect x="741" y="4" width="4" height="811" fill="#dfe3e8"/><rect x="738" y="65" width="3" height="730" fill="#e8ebef"/>
<rect x="744" y="0" width="1" height="819" fill="#555a60"/>
<ellipse cx="705" cy="824" rx="21" ry="16" fill="#2e8a62" stroke="#fff" stroke-width="1.500"/><ellipse cx="705" cy="815" rx="11" ry="3" fill="#74c6a0"/>
</svg>
</body></html>
